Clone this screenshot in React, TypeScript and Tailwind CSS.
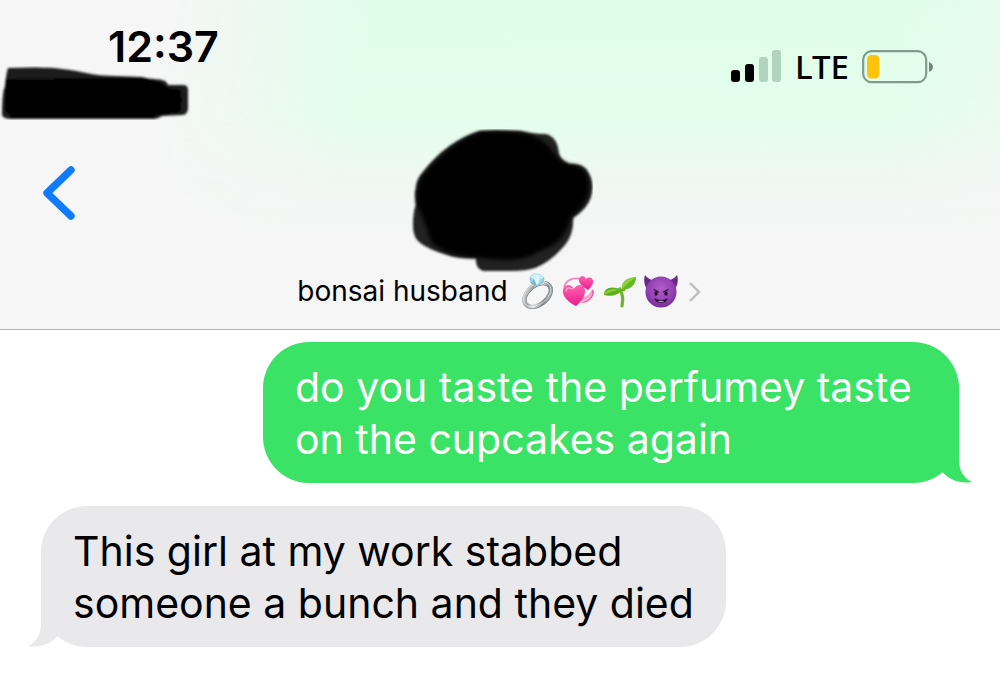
import type { ReactNode } from "react";

function TimeScribble() {
  return (
    <svg viewBox="0 0 190 54" className="block h-[54px] w-[190px]" aria-hidden="true">
      <defs>
        <filter id="soft-a" x="-5%" y="-10%" width="110%" height="120%">
          <feGaussianBlur stdDeviation="1" />
        </filter>
      </defs>
      <g filter="url(#soft-a)">
        <path d="M8 2C30 1 55 1 70 4C88 7 98 10 115 10L142 11Q148 13 154 13Q167 13 168 19L183 19Q188 19 188 24L188 43Q187 49 182 49L162 50Q158 53 154 53L12 53Q3 53 2 49Q2 26 5 20Q6 8 8 2Z" fill="#1c1c1c" />
        <path d="M6 13L142 12Q164 16 167 22L180 24Q183 32 180 46L158 49L152 52L12 52L5 44Z" fill="#000" />
      </g>
    </svg>
  );
}

function AvatarScribble() {
  return (
    <svg viewBox="0 0 182 144" className="block h-[144px] w-[182px]" aria-hidden="true">
      <defs>
        <filter id="soft-b" x="-5%" y="-5%" width="110%" height="110%">
          <feGaussianBlur stdDeviation="1.3" />
        </filter>
        <filter id="soft-c" x="-5%" y="-5%" width="110%" height="110%">
          <feGaussianBlur stdDeviation="2.2" />
        </filter>
      </defs>
      <path filter="url(#soft-b)" d="M69 2Q77 1 110 2Q120 5 135 5C143 7 147 14 148 24Q149 31 158 35Q173 34 177 43Q184 54 180 68Q177 79 162 89Q163 105 154 116Q141 132 124 139Q115 142 101 142H72Q64 139 65 129Q48 130 36 126Q16 120 8 113Q2 108 2 96Q2 82 5 76Q3 64 5 59Q5 51 12 43Q36 12 69 2Z" fill="#222" />
      <path filter="url(#soft-c)" d="M69 3Q96 1 116 5Q134 9 146 28Q154 36 167 37Q179 43 178 60Q176 76 160 88Q155 108 142 116Q130 122 119 127Q103 134 71 129Q36 128 20 113Q15 95 6 76Q5 52 13 45Q38 14 69 3Z" fill="#000" />
    </svg>
  );
}

function SignalBars() {
  return (
    <svg viewBox="0 0 52 34" className="block h-[34px] w-[52px]" role="img" aria-label="Signal: 2 of 4 bars">
      <rect x="1" y="20" width="9" height="12" rx="3" fill="#000" />
      <rect x="15" y="14" width="9" height="18" rx="3" fill="#000" />
      <rect x="29" y="7" width="9" height="25" rx="3" fill="#b2d3bd" />
      <rect x="42" y="0" width="9" height="32" rx="3" fill="#b2d3bd" />
    </svg>
  );
}

function Battery() {
  return (
    <svg viewBox="0 0 72 34" className="block h-[34px] w-[72px]" role="img" aria-label="Battery low">
      <rect x="1.2" y="1.2" width="63" height="31" rx="8.5" fill="none" stroke="#819b8a" strokeWidth="2.2" />
      <rect x="5" y="5" width="12.5" height="23.5" rx="4.5" fill="#fdc40a" />
      <path d="M67 12Q71 14 71 17T67 22Z" fill="#75857b" />
    </svg>
  );
}

function RingEmoji() {
  return (
    <svg viewBox="0 0 36 36" className="size-9" role="img" aria-label="ring">
      <defs>
        <linearGradient id="silver" x1="0" y1="0" x2="1" y2="1">
          <stop offset="0" stopColor="#d5d9da" />
          <stop offset=".3" stopColor="#a3a8ab" />
          <stop offset=".5" stopColor="#dfe2e3" />
          <stop offset=".75" stopColor="#858a8d" />
          <stop offset="1" stopColor="#c0c4c6" />
        </linearGradient>
      </defs>
      <g transform="rotate(-38 17 22)">
        <ellipse cx="17.5" cy="22.5" rx="15" ry="9.5" fill="none" stroke="#6c7274" strokeWidth="4.2" />
        <ellipse cx="17.5" cy="22" rx="15" ry="9.5" fill="none" stroke="url(#silver)" strokeWidth="3.8" />
        <ellipse cx="17.5" cy="21.600" rx="15.600" ry="10" fill="none" stroke="#eef0f0" strokeWidth=".6" />
      </g>
      <path d="M10 4L14 1L20 1.5L24 5L23 9L17 13L11 10Z" fill="#9fd8ea" stroke="#6faec6" strokeWidth=".7" />
      <path d="M10 4L14 6L20 5.5L24 5L20 1.5L14 1Z" fill="#cdf0f8" />
      <path d="M14 6L17 13L20 5.5L17 2Z" fill="#dff7fc" />
      <path d="M11 10L14 6L17 13Z" fill="#72b9d2" />
    </svg>
  );
}

function HeartsEmoji() {
  return (
    <svg viewBox="0 0 36 36" className="size-9" role="img" aria-label="revolving hearts">
      <defs>
        <linearGradient id="pink" x1="0" y1="0" x2="0" y2="1">
          <stop offset="0" stopColor="#ff62b0" />
          <stop offset="1" stopColor="#e81c8c" />
        </linearGradient>
      </defs>
      <path d="M3 14C5 7 12 4 21 6" fill="none" stroke="#f18cba" strokeWidth="1.8" />
      <path d="M31 16C32 24 27 28 18 30C27 31 33 25 33 18Z" fill="#ef65a4" />
      <path d="M20 24C26 24 29 21 31 16L31 22C28 26 24 28 18 29Z" fill="#f9a3ca" />
      <path d="M27 17C22 14 17 10 18 6C19 2 24 2 25 6C28 3 33 5 32 10C31 13 29 15 27 17Z" fill="url(#pink)" />
      <path d="M15 33C7 29 1 23 2 17C3 11 10 10 13 16C16 10 24 11 24 18C24 24 20 29 15 33Z" fill="url(#pink)" />
      <path d="M5 18C6 14 9 14 11 16" fill="none" stroke="#ffa1cf" strokeWidth="1.5" strokeLinecap="round" />
    </svg>
  );
}

function SeedlingEmoji() {
  return (
    <svg viewBox="0 0 36 36" className="size-9" role="img" aria-label="seedling">
      <path d="M18 16Q22 23 20 33" fill="none" stroke="#6eb52e" strokeWidth="3.2" strokeLinecap="round" />
      <path d="M2 22C2 15 9 12 20 17C17 22 8 24 2 22Z" fill="#5bae20" />
      <path d="M2 22C3 17 10 15 20 17C13 17 8 19 2 22Z" fill="#8ccb35" />
      <path d="M20 17C19 8 25 5 34 4C34 12 28 17 20 17Z" fill="#63b823" />
      <path d="M20 17C19 8 25 5 34 4C29 8 24 11 20 17Z" fill="#8ed23a" />
      <path d="M18 17H23" stroke="#6aaa29" strokeWidth="2" />
    </svg>
  );
}

function ImpEmoji() {
  return (
    <svg viewBox="0 0 36 36" className="size-9" role="img" aria-label="smiling face with horns">
      <defs>
        <radialGradient id="imp" cx=".5" cy=".4" r=".65">
          <stop offset="0" stopColor="#b05fca" />
          <stop offset=".6" stopColor="#9541b5" />
          <stop offset="1" stopColor="#6f2a8e" />
        </radialGradient>
      </defs>
      <path d="M2 2C0 8 2 14 5 17L14 7C9 8 5 6 2 2Z" fill="#6b2789" />
      <path d="M34 2C36 8 34 14 31 17L22 7C27 8 31 6 34 2Z" fill="#6b2789" />
      <circle cx="18" cy="19" r="15.5" fill="url(#imp)" />
      <path d="M11 16.500L15.500 19M25 16.500L20.500 19" stroke="#321044" strokeWidth="1.4" strokeLinecap="round" />
      <ellipse cx="13" cy="20.500" rx="1.700" ry="2.200" fill="#28102f" />
      <ellipse cx="23" cy="20.500" rx="1.700" ry="2.200" fill="#28102f" />
      <path d="M12 26Q18 29.500 24 26Q22.500 29.500 18 29.500T12 26Z" fill="#f0e6f4" stroke="#32113f" strokeWidth="1.200" strokeLinejoin="round" />
    </svg>
  );
}

function Tail({ className }: { className: string }) {
  return (
    <svg viewBox="0 0 60 56" className={className} aria-hidden="true">
      <path d="M30 45C38 53 48 57 60 55C51 51 47 43 47 32V8Z" fill="currentColor" />
    </svg>
  );
}

function SentMessage({ children }: { children: ReactNode }) {
  return (
    <li className="relative max-w-[696px] self-end text-white">
      <p className="rounded-[46px] bg-[#3ae365] px-8 pt-[19px] pb-[18px]">{children}</p>
      <Tail className="absolute -right-[13px] bottom-0 h-14 w-[60px] text-[#3ae365]" />
    </li>
  );
}

function ReceivedMessage({ children }: { children: ReactNode }) {
  return (
    <li className="relative max-w-[696px] self-start text-black">
      <p className="rounded-[46px] bg-[#e9e9eb] px-8 pt-[19px] pb-[18px]">{children}</p>
      <Tail className="absolute bottom-0 -left-[13px] h-14 w-[60px] -scale-x-100 text-[#e9e9eb]" />
    </li>
  );
}

export default function App() {
  return (
    <div className="min-h-screen bg-white font-['Inter','Liberation_Sans',sans-serif]">
      <header className="border-b border-[#b5b5b7] bg-[#f6f6f6] bg-[linear-gradient(100deg,#f6f6f6_16%,rgba(246,246,246,0)_36%,rgba(246,246,246,0)_86%,rgba(246,246,246,0.5)_100%),linear-gradient(to_bottom,#dffde9_0%,#e4feec_36%,#f1f7f3_56%,#f6f6f6_74%)] pb-5">
        <div className="flex h-[120px] items-start justify-between pr-[66px]">
          <div>
            <time className="block h-[66px] pt-[22px] pl-[108px] text-[43px] leading-[48px] font-semibold">12:37</time>
            <TimeScribble />
          </div>
          <div className="flex items-center gap-[13px] pt-[43px]">
            <SignalBars />
            <span className="font-['Noto_Sans',sans-serif] text-[33px] leading-[48px] font-medium">LTE</span>
            <Battery />
          </div>
        </div>
        <div className="grid grid-cols-[1fr_auto_1fr] items-start pt-[9px] pl-1">
          <button type="button" aria-label="Back" className="mt-[35px] ml-9 justify-self-start text-[#0f7bff]">
            <svg viewBox="0 0 36 58" className="block h-[58px] w-9" aria-hidden="true">
              <path d="M31 6L7 29L31 52" fill="none" stroke="currentColor" strokeWidth="7.4" strokeLinecap="round" strokeLinejoin="round" />
            </svg>
          </button>
          <AvatarScribble />
        </div>
        <a href="#contact" className="flex items-center justify-center text-[28px] leading-9 text-black">
          <span className="mr-3">bonsai husband</span>
          <span className="flex gap-[5px]">
            <RingEmoji />
            <HeartsEmoji />
            <SeedlingEmoji />
            <ImpEmoji />
          </span>
          <svg viewBox="0 0 16 24" className="ml-2 h-6 w-4" aria-hidden="true">
            <path d="M3 4L12 13L3 22" fill="none" stroke="#bcbcbe" strokeWidth="2.4" />
          </svg>
        </a>
      </header>
      <main>
        <ul className="flex flex-col gap-[23px] px-[41px] pt-3 pb-12 text-[41px] leading-[52px]">
          <SentMessage>do you taste the perfumey taste on the cupcakes again</SentMessage>
          <ReceivedMessage>
            This girl at my work stabbed
            <br />
            someone a bunch and they died
          </ReceivedMessage>
        </ul>
      </main>
    </div>
  );
}
